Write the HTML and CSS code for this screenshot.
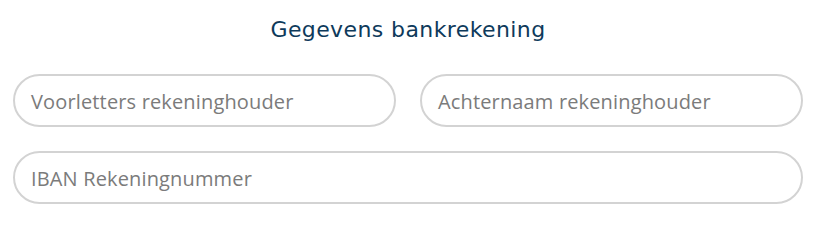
FILE: index.html
```html
<!DOCTYPE html>
<html lang="nl">
<head>
<meta charset="utf-8">
<title>Gegevens bankrekening</title>
<link rel="stylesheet" href="styles.css">
</head>
<body>
<section class="panel">
  <h2 class="title">Gegevens bankrekening</h2>
  <div class="grid">
    <div class="field"><span class="placeholder">Voorletters rekeninghouder</span></div>
    <div class="field"><span class="placeholder">Achternaam rekeninghouder</span></div>
    <div class="field full"><span class="placeholder">IBAN Rekeningnummer</span></div>
  </div>
</section>
</body>
</html>
```
FILE: styles.css
```css
html, body {
  margin: 0;
  padding: 0;
  background: #ffffff;
}
body {
  font-family: "Open Sans", "Noto Sans", sans-serif;
}
.panel {
  width: 790px;
  margin-left: 13px;
  padding-top: 16px;
}
.title {
  margin: 0 0 30px;
  text-align: center;
  font-family: "DejaVu Sans", "Open Sans", sans-serif;
  font-size: 22px;
  line-height: 28px;
  letter-spacing: 0.4px;
  font-weight: normal;
  color: #0e3a5b;
}
.grid {
  display: grid;
  grid-template-columns: 1fr 1fr;
  column-gap: 24px;
  row-gap: 24px;
}
.field {
  height: 53px;
  box-sizing: border-box;
  border: 2px solid #d3d3d3;
  border-radius: 27px;
  padding: 2px 16px 0;
  display: flex;
  align-items: center;
}
.full {
  grid-column: 1 / -1;
}
.placeholder {
  font-size: 20px;
  letter-spacing: 0.15px;
  color: #7b7b7b;
}
```
